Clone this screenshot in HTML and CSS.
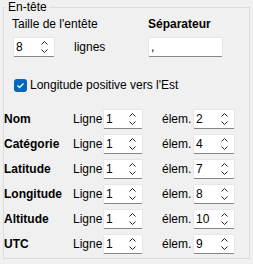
FILE: index.html
```html
<!DOCTYPE html>
<html lang="fr">
<head>
    <meta charset="UTF-8">
    <title>En-tête</title>
    <link rel="stylesheet" href="styles.css">
</head>
<body>
    <fieldset class="group">
        <legend>En-tête</legend>

        <div class="head">
            <span class="cap">Taille de l'entête</span>
            <span class="cap bold">Séparateur</span>

            <div class="size">
                <div class="spin wide"><span class="val">8</span>
                    <svg class="arrows" width="8" height="14" viewBox="0 0 8 14"><polyline points="0.5,4.5 3.5,1.5 6.5,4.5"/><polyline points="0.5,9.5 3.5,12.5 6.5,9.5"/></svg>
                </div>
                <span class="unit">lignes</span>
            </div>
            <div class="edit"><span class="val">,</span></div>
        </div>

        <label class="check">
            <span class="box"><svg width="13" height="13" viewBox="0 0 13 13"><polyline points="3.5,6.5 5.5,8.5 9.5,4.5"/></svg></span>
            Longitude positive vers l'Est
        </label>

        <div class="rows">
            <span class="name">Nom</span>
            <span class="lbl">Ligne</span>
            <div class="spin"><span class="val">1</span><svg class="arrows" width="8" height="14" viewBox="0 0 8 14"><polyline points="0.5,4.5 3.5,1.5 6.5,4.5"/><polyline points="0.5,9.5 3.5,12.5 6.5,9.5"/></svg></div>
            <span class="lbl el">élem.</span>
            <div class="spin wide"><span class="val">2</span><svg class="arrows" width="8" height="14" viewBox="0 0 8 14"><polyline points="0.5,4.5 3.5,1.5 6.5,4.5"/><polyline points="0.5,9.5 3.5,12.5 6.5,9.5"/></svg></div>

            <span class="name">Catégorie</span>
            <span class="lbl">Ligne</span>
            <div class="spin"><span class="val">1</span><svg class="arrows" width="8" height="14" viewBox="0 0 8 14"><polyline points="0.5,4.5 3.5,1.5 6.5,4.5"/><polyline points="0.5,9.5 3.5,12.5 6.5,9.5"/></svg></div>
            <span class="lbl el">élem.</span>
            <div class="spin wide"><span class="val">4</span><svg class="arrows" width="8" height="14" viewBox="0 0 8 14"><polyline points="0.5,4.5 3.5,1.5 6.5,4.5"/><polyline points="0.5,9.5 3.5,12.5 6.5,9.5"/></svg></div>

            <span class="name">Latitude</span>
            <span class="lbl">Ligne</span>
            <div class="spin"><span class="val">1</span><svg class="arrows" width="8" height="14" viewBox="0 0 8 14"><polyline points="0.5,4.5 3.5,1.5 6.5,4.5"/><polyline points="0.5,9.5 3.5,12.5 6.5,9.5"/></svg></div>
            <span class="lbl el">élem.</span>
            <div class="spin wide"><span class="val">7</span><svg class="arrows" width="8" height="14" viewBox="0 0 8 14"><polyline points="0.5,4.5 3.5,1.5 6.5,4.5"/><polyline points="0.5,9.5 3.5,12.5 6.5,9.5"/></svg></div>

            <span class="name">Longitude</span>
            <span class="lbl">Ligne</span>
            <div class="spin"><span class="val">1</span><svg class="arrows" width="8" height="14" viewBox="0 0 8 14"><polyline points="0.5,4.5 3.5,1.5 6.5,4.5"/><polyline points="0.5,9.5 3.5,12.5 6.5,9.5"/></svg></div>
            <span class="lbl el">élem.</span>
            <div class="spin wide"><span class="val">8</span><svg class="arrows" width="8" height="14" viewBox="0 0 8 14"><polyline points="0.5,4.5 3.5,1.5 6.5,4.5"/><polyline points="0.5,9.5 3.5,12.5 6.5,9.5"/></svg></div>

            <span class="name">Altitude</span>
            <span class="lbl">Ligne</span>
            <div class="spin"><span class="val">1</span><svg class="arrows" width="8" height="14" viewBox="0 0 8 14"><polyline points="0.5,4.5 3.5,1.5 6.5,4.5"/><polyline points="0.5,9.5 3.5,12.5 6.5,9.5"/></svg></div>
            <span class="lbl el">élem.</span>
            <div class="spin wide"><span class="val">10</span><svg class="arrows" width="8" height="14" viewBox="0 0 8 14"><polyline points="0.5,4.5 3.5,1.5 6.5,4.5"/><polyline points="0.5,9.5 3.5,12.5 6.5,9.5"/></svg></div>

            <span class="name">UTC</span>
            <span class="lbl">Ligne</span>
            <div class="spin"><span class="val">1</span><svg class="arrows" width="8" height="14" viewBox="0 0 8 14"><polyline points="0.5,4.5 3.5,1.5 6.5,4.5"/><polyline points="0.5,9.5 3.5,12.5 6.5,9.5"/></svg></div>
            <span class="lbl el">élem.</span>
            <div class="spin wide"><span class="val">9</span><svg class="arrows" width="8" height="14" viewBox="0 0 8 14"><polyline points="0.5,4.5 3.5,1.5 6.5,4.5"/><polyline points="0.5,9.5 3.5,12.5 6.5,9.5"/></svg></div>
        </div>
    </fieldset>
</body>
</html>
```

FILE: styles.css
```css
body {
    margin: 0;
    background-color: #f0f0f0;
    font-family: "Liberation Sans", Arial, sans-serif;
    font-size: 12px;
    line-height: 14px;
    color: #000;
}
.group {
    margin: 0 3px;
    padding: 0;
    height: 259px;
    border: 1px solid #dcdcdc;
    box-sizing: border-box;
    min-width: 0;
}
.group legend {
    padding: 0 2px;
    margin-left: 2px;
}
.bold,
.name {
    font-weight: bold;
}
.head {
    display: grid;
    grid-template-columns: 136px 75px;
    row-gap: 6px;
    padding: 3px 0 0 8px;
}
.size {
    display: flex;
    align-items: center;
    padding-left: 1px;
}
.unit {
    margin-left: 19px;
}
.spin,
.edit {
    display: flex;
    align-items: center;
    justify-content: space-between;
    box-sizing: border-box;
    height: 20px;
    background-color: #fff;
    border: 1px solid #e6e6e6;
    border-bottom-color: #868686;
    border-radius: 2px;
    padding: 0 5px 0 2px;
}
.spin {
    width: 40px;
}
.spin.wide {
    width: 42px;
}
.edit {
    width: 75px;
}
.arrows {
    fill: none;
    stroke: #222;
    stroke-width: 1;
}
.check {
    display: flex;
    align-items: center;
    gap: 3px;
    margin: 21px 0 0 10px;
}
.box {
    display: flex;
    width: 13px;
    height: 13px;
    border-radius: 3px;
    background-color: #0067c0;
}
.box polyline {
    fill: none;
    stroke: #fff;
    stroke-width: 1.3;
}
.rows {
    display: grid;
    grid-template-columns: 69px 30px 40px 50px 42px;
    grid-auto-rows: 20px;
    row-gap: 5px;
    align-items: center;
    margin-top: 17px;
}
.el {
    padding-left: 19px;
}
```
